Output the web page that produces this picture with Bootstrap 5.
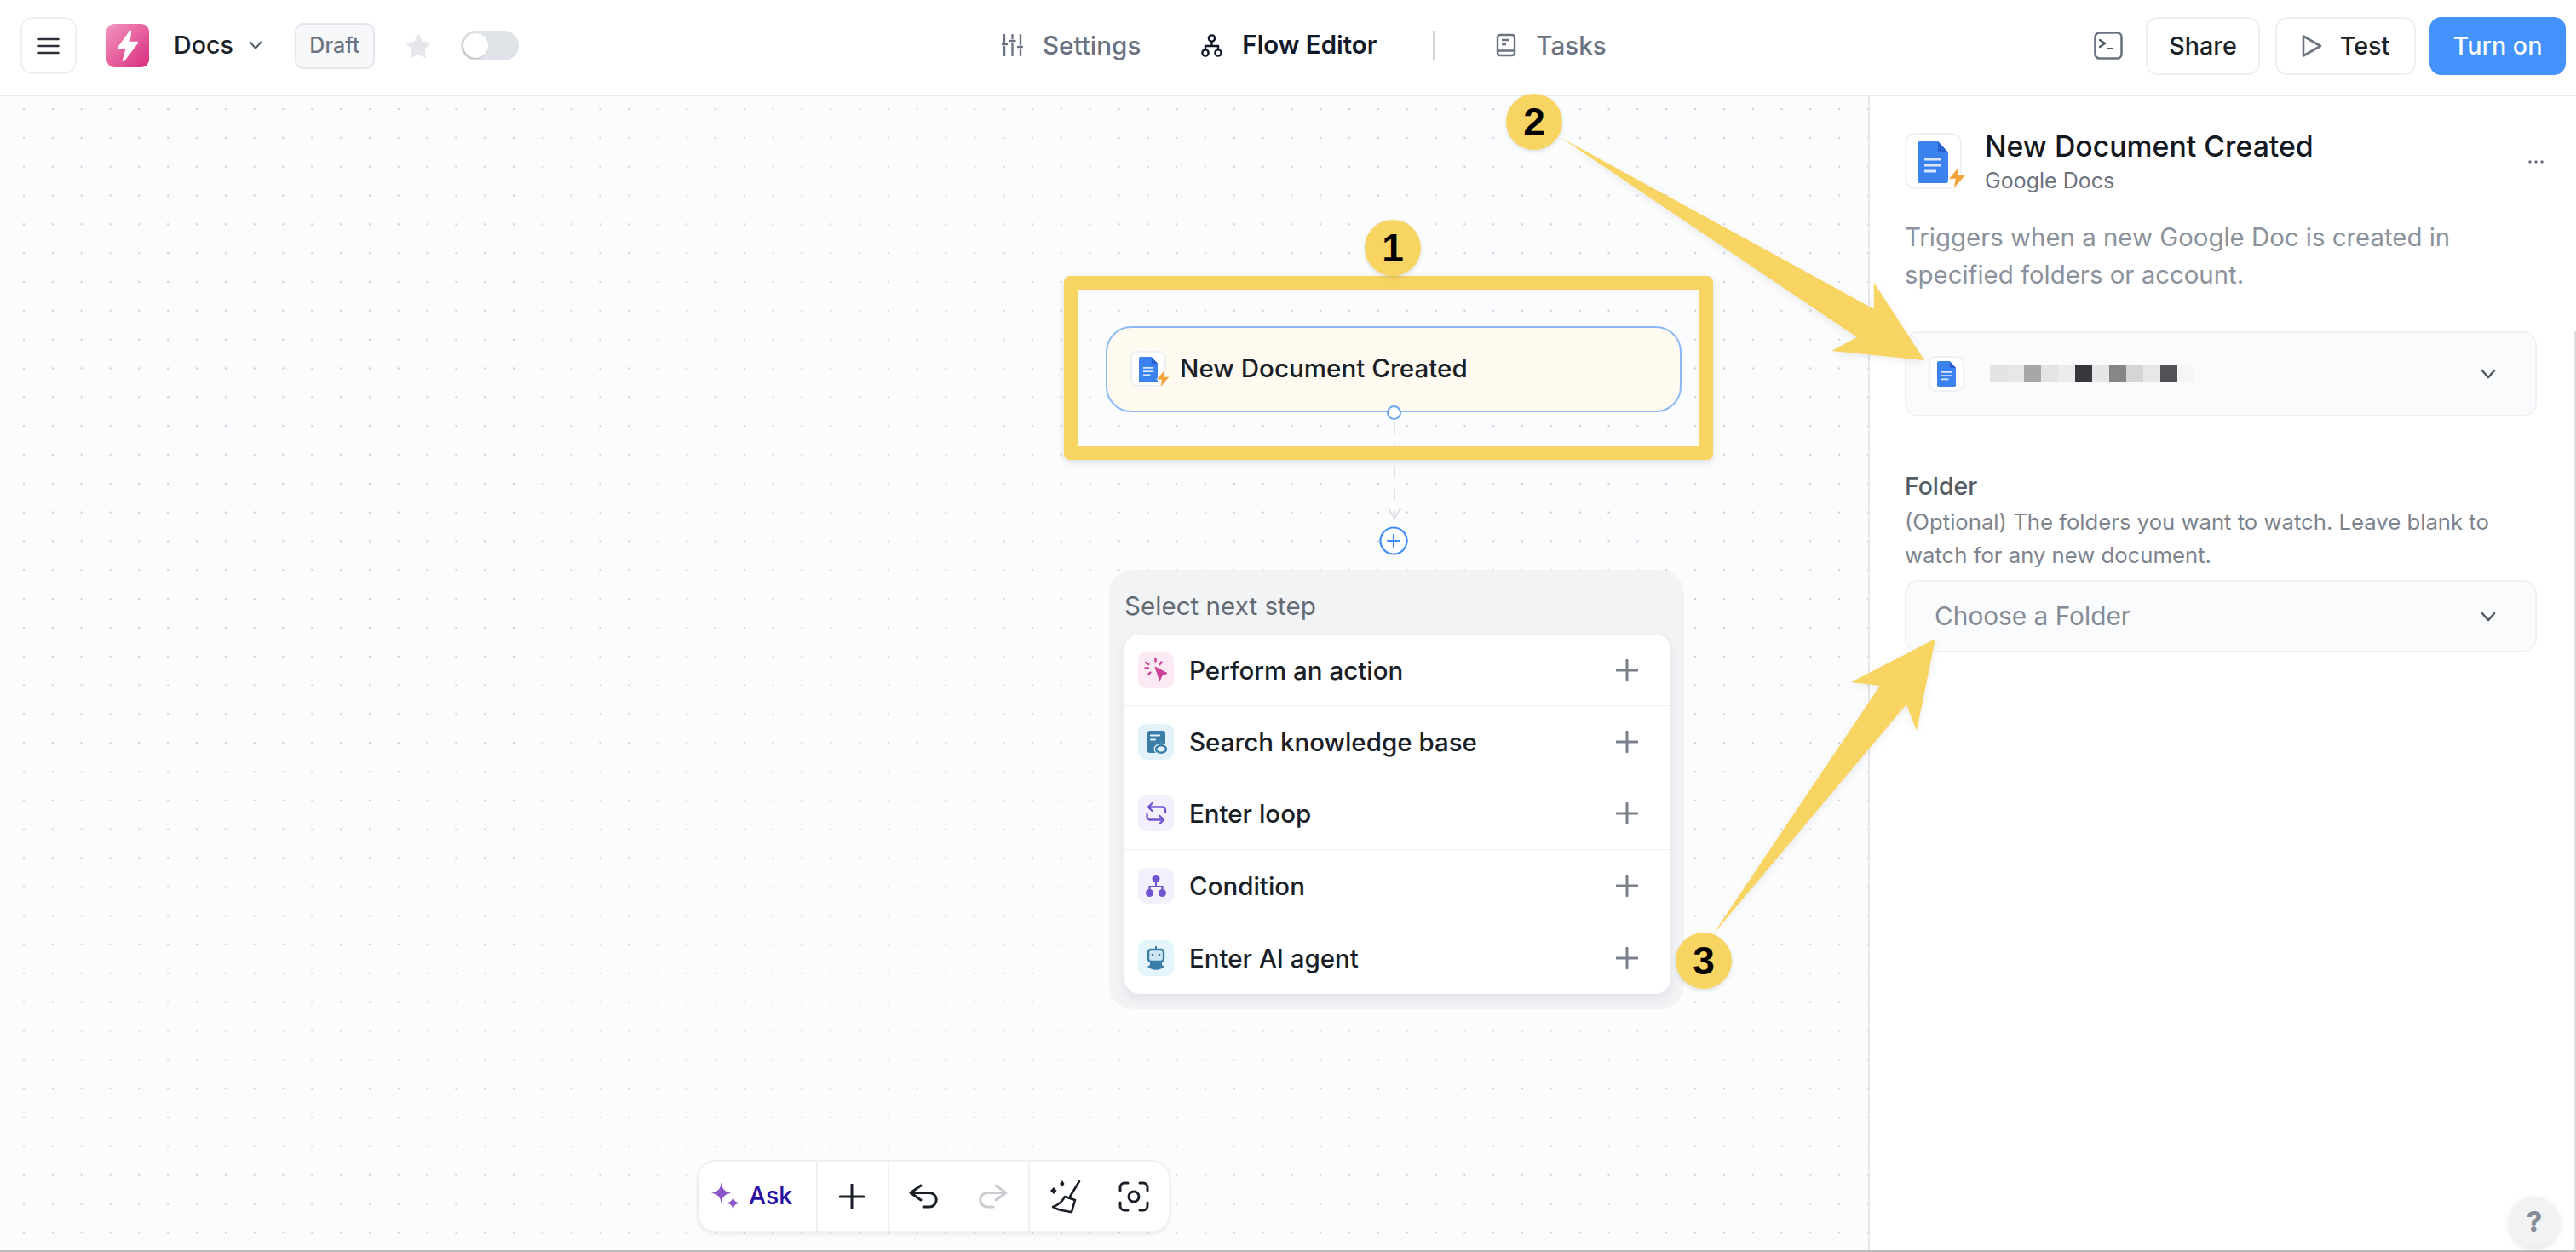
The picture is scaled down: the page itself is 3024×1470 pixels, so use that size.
<!doctype html>
<html lang="en">
<head>
<meta charset="utf-8">
<title>Flow Editor</title>
<link href="https://cdn.jsdelivr.net/npm/bootstrap@5.3.0/dist/css/bootstrap.min.css" rel="stylesheet">
<style>
html,body{height:100%;margin:0}
body{font-family:Inter,"Liberation Sans",sans-serif;color:#1a1f27;background:#fff;width:3024px;height:1470px;overflow:hidden;position:relative;font-size:28px}
.appframe{height:1470px}
.topbar{height:113px;border-bottom:2px solid #e8ebf0;padding:0 12px 4px 24px;background:#fff;flex:none}
.leftgrp{width:1152px;flex:none}
.iconbtn{width:66px;height:67px;border:2px solid #eff0f3;border-radius:14px;background:#fff;padding:0;margin-right:35px}
.logo{width:50px;height:51px;border-radius:9px;background:linear-gradient(135deg,#f296c1,#da2c7c);margin-right:29px}
.docsname{font-weight:500;font-size:28.6px;margin-right:18px}
.draftchip{height:54px;width:94px;border:2px solid #e3e6ea;border-radius:10px;background:#f7f8fa;color:#6b7280;font-size:25px;font-weight:500;margin-left:38px;margin-right:36px}
.switcher{width:68px;height:35px;border-radius:18px;background:#dfe2e6;margin-left:35px;position:relative}
.switcher::after{content:"";position:absolute;left:3px;top:3px;width:29px;height:29px;border-radius:50%;background:#fff;box-shadow:-1px 1px 2px rgba(0,0,0,.2)}
.tabitem{color:#6b7280;font-size:29.6px;font-weight:500;gap:23px;padding:0;white-space:nowrap}
.tabitem.activetab{color:#111827;font-weight:600;font-size:29.4px}
.tabgap{margin-right:71px}
.tabsep{width:2px;height:35px;background:#d3d6db;margin:0 72px 0 66px}
.rightgrp{margin-left:auto}
.topbtn{height:68px;border:2px solid #eeeff2;border-radius:14px;background:#fff;font-size:28.7px;font-weight:500;color:#1a1f27;padding:0;display:flex;align-items:center;justify-content:center}
.topbtn.sharebtn{width:134px;margin:0 18px 0 27px}
.topbtn.testbtn{width:165px;margin-right:16px;gap:21px}
.topbtn.turnbtn{width:160px;background:#4492fb;border-color:#4492fb;color:#fff}
.workarea{flex:1 1 auto;min-height:0;position:relative}
.canvasarea{flex:1 1 auto;position:relative;background-color:#fbfcfe;background-image:radial-gradient(circle at 2px 2px,#cdd0d5 1px,transparent 1.6px);background-size:33.83px 33.83px;background-position:26px 13px;border-right:2px solid #e6e8ec}
.sidepanel{width:829px;flex:none;padding:43px 44px 0 41px;background:#fff;position:relative}
.sidepanel::after{content:"";position:absolute;right:0;top:276px;bottom:0;width:2px;background:#dcdee2}
.appicon{width:67px;height:66px;border:2px solid #eff0f3;border-radius:12px;background:#fff;position:relative;margin-right:27px;flex:none}
.appicon .docglyph{width:36px;height:49px;position:absolute;left:13px;top:8px}
.appicon .boltglyph{width:24px;height:29px;position:absolute;right:-8px;bottom:-3px}
.paneltitle{font-size:33.8px;font-weight:500;line-height:40px;color:#14181f;margin-top:-4px}
.panelsub{font-size:25px;line-height:34px;color:#6b7280;margin-top:3px}
.menudots{position:absolute;left:772px;top:70px;width:20px;height:14px}
.descline{font-size:29.4px;line-height:44px;color:#8b929c;margin:28px 0 0;white-space:nowrap}
.selectbox{border:2px solid #f0f1f4;border-radius:16px;background:#fafbfd;width:742px;position:relative}
.connbox{height:100px;margin-top:44px;padding-left:26px}
.minidoc{width:42px;height:42px;border:2px solid #eff0f3;border-radius:9px;background:#fff;flex:none}
.blurcells{margin-left:30px;height:20px}
.blurcells i{display:block;width:20px;height:20px}
.chev{position:absolute;right:46px;top:50%;margin-top:-6px;width:18px;height:13px}
.fieldlabel{font-size:28.4px;line-height:40px;font-weight:500;color:#565c66;margin-top:62px}
.fieldhelp{font-size:25.7px;line-height:39px;color:#7d848e;margin:2px 0 0;white-space:nowrap}
.folderbox{height:85px;margin-top:10px;padding-left:33px;color:#858b95;font-size:29.8px}
.helpdot{position:absolute;left:751px;top:1293px;width:58px;height:58px;border-radius:50%;background:#f1f2f4;box-shadow:0 2px 8px rgba(0,0,0,.12);color:#868c96;font-weight:800;font-size:32px;line-height:58px;text-align:center}
.bottomline{height:2px;background:#b9bcb9;flex:none}
.trigger{position:absolute;left:1298px;top:270px;width:676px;height:101px;border:2px solid #8cb9f6;border-radius:30px;background:#fffaf0;padding:0 0 3px 27px}
.trigger .appicon{width:42px;height:42px;border-radius:8px;margin-right:16px;top:1px}
.trigger .docglyph{width:22px;height:30px;left:8px;top:5px}
.trigger .boltglyph{width:18px;height:23px;right:-7px;bottom:-4px}
.triggertext{font-size:29.6px;font-weight:500;color:#1a1f27}
.handle{position:absolute;left:1628px;top:363px;width:17px;height:17px;border:2px solid #6ea5f2;border-radius:50%;background:#fff}
.connector{position:absolute;left:1625px;top:380px;width:24px;height:122px}
.addcircle{position:absolute;left:1619px;top:505px;width:34px;height:34px}
.nextpanel{position:absolute;left:1302px;top:556px;width:675px;height:516px;border-radius:28px;background:#f2f3f5;padding:0 16px 0 18px}
.nextlabel{font-size:29.6px;line-height:40px;color:#646a74;margin-top:22px;height:54px}
.steplist{border-radius:18px;background:#fff;box-shadow:0 6px 14px rgba(20,30,50,.07);height:422px;--bs-list-group-border-color:#eff0f2;--bs-list-group-bg:transparent}
.stepitem{height:84.4px;padding:0 38px 0 16px;display:flex;align-items:center;font-size:29.5px;font-weight:500;color:#1a1f27;border-width:0 0 2px}
.stepitem:last-child{border-bottom:0}
.stepicon{width:42px;height:42px;border-radius:9px;margin-right:18px;flex:none}
.tintpink{background:#fbe9f4}.tintblue{background:#e3f2fa}.tintviolet{background:#f3f0fc}.tintsky{background:#e4f5fc}
.toolstrip{position:absolute;left:818px;top:1249px;width:556px;height:85px;background:#fff;border:2px solid #eff0f2;border-radius:22px;box-shadow:0 3px 4px rgba(0,0,0,.06)}
.toolcell{height:100%;border-left:2px solid #eff0f2}
.toolcell:first-child{border-left:0;width:138px;padding-left:15px;gap:10px}
.askword{color:#2710a2;font-weight:500;font-size:28.4px}
.cellplus{width:85px;padding-right:2px}.cellhist{width:165px;gap:44px}.celltools{width:166px;gap:44px}
.annotlayer{position:absolute;left:0;top:0;width:3024px;height:1470px;pointer-events:none;z-index:20}
.annotsvg{position:absolute;left:0;top:0;filter:drop-shadow(0 3px 4px rgba(0,0,0,.08))}
.yframe{position:absolute;left:1249px;top:324px;width:762px;height:216px;border:16.5px solid #f8d462;border-radius:7px;box-shadow:0 3px 8px rgba(0,0,0,.12),inset 0 3px 5px rgba(0,0,0,.03)}
.stepnum{position:absolute;width:66px;height:66px;border-radius:50%;background:#f8d462;color:#000;font-family:"Liberation Sans",Arial,sans-serif;font-weight:700;font-size:46px;line-height:66px;text-align:center;box-shadow:0 2px 5px rgba(0,0,0,.12)}
.numone{left:1602px;top:258px}.numtwo{left:1768px;top:110px}.numthree{left:1967px;top:1095px}
</style>
</head>
<body>
<svg width="0" height="0" class="position-absolute">
<defs>
<symbol id="gdoc" viewBox="0 0 36 49"><path d="M3 0H24L36 13V46a3 3 0 0 1-3 3H3a3 3 0 0 1-3-3V3a3 3 0 0 1 3-3z" fill="#3b82ee"/><path d="M24 0L36 13H24z" fill="#2a5fd0"/><path d="M8 21H28M8 28H28M8 35H22" stroke="#dbe8fb" stroke-width="3" fill="none"/></symbol>
<symbol id="gbolt" viewBox="0 0 21 25" preserveAspectRatio="none"><path d="M13 1L2 14H9L7 24L20 10H12z" fill="#f5a23a" stroke="#fff" stroke-width=".8" stroke-linejoin="round"/></symbol>
<symbol id="chevdown" viewBox="0 0 20 14"><path d="M2 2L10 11L18 2" fill="none" stroke="#4b5563" stroke-width="2.6" stroke-linecap="round" stroke-linejoin="round"/></symbol>
<symbol id="greyplus" viewBox="0 0 26 26"><path d="M13 1V25M1 13H25" stroke="#7b818b" stroke-width="3" stroke-linecap="round"/></symbol>
</defs>
</svg>
<div class="appframe d-flex flex-column">
<header class="topbar d-flex align-items-center">
  <div class="leftgrp d-flex align-items-center">
    <button class="iconbtn btn d-flex align-items-center justify-content-center" type="button" aria-label="Menu"><svg width="26" height="20" viewBox="0 0 26 20"><path d="M1.5 2H24.5M1.5 10H24.5M1.5 18H24.5" stroke="#2b3038" stroke-width="2.5" stroke-linecap="round"/></svg></button>
    <span class="logo d-flex align-items-center justify-content-center"><svg width="28" height="38" viewBox="0 0 28 38"><path d="M17 2L3 21.500H13L9 36L25 15H15z" fill="#fff" stroke="#fff" stroke-width="2.500" stroke-linejoin="round"/></svg></span>
    <span class="docsname">Docs</span>
    <svg width="16" height="11" viewBox="0 0 20 14"><use href="#chevdown"/></svg>
    <span class="draftchip d-flex align-items-center justify-content-center">Draft</span>
    <svg width="30" height="30" viewBox="0 0 30 30"><path d="M15 2L19 10.500L28 12L21.500 18.500L23 28L15 23.500L7 28L8.500 18.500L2 12L11 10.500z" fill="#e5e7eb" stroke="#e5e7eb" stroke-width="2" stroke-linejoin="round"/></svg>
    <span class="switcher"></span>
  </div>
  <nav class="d-flex align-items-center">
    <a class="tabitem tabgap d-flex align-items-center text-decoration-none" href="#"><svg width="25" height="26" viewBox="0 0 25 26"><path d="M3 1V9M3 15V25M12.500 1V5M12.500 11V25M22 1V12M22 18V25M0 12H6M9.500 8H15.500M19 15H25" stroke="#6b7280" stroke-width="2.400" fill="none" stroke-linecap="round"/></svg>Settings</a>
    <a class="tabitem activetab d-flex align-items-center text-decoration-none" href="#"><svg width="25" height="27" viewBox="0 0 25 27"><g fill="none" stroke="#111827" stroke-width="2.400"><circle cx="12.500" cy="5" r="3.600"/><circle cx="5" cy="22" r="3.600"/><circle cx="20" cy="22" r="3.600"/><path d="M12.500 9V14M5 18V14H20V18"/></g></svg>Flow Editor</a>
    <span class="tabsep"></span>
    <a class="tabitem d-flex align-items-center text-decoration-none" href="#"><svg width="24" height="28" viewBox="0 0 24 28"><g fill="none" stroke="#6b7280" stroke-width="2.400" stroke-linejoin="round"><rect x="2" y="2" width="20" height="24" rx="3"/><path d="M2 20.500H22M7 8H16M7 13H12"/></g></svg>Tasks</a>
  </nav>
  <div class="rightgrp d-flex align-items-center">
    <svg width="34" height="33" viewBox="0 0 34 33"><g fill="none" stroke="#6b7280" stroke-linecap="round"><rect x="1.500" y="1.500" width="31" height="30" rx="5" stroke-width="2.600"/><path d="M7 10L13 14L7 18M16 20H22" stroke="#4b5563" stroke-width="2.200"/></g></svg>
    <button class="btn topbtn sharebtn" type="button">Share</button>
    <button class="btn topbtn testbtn" type="button"><svg width="24" height="28" viewBox="0 0 24 28"><path d="M2 2.500L22 14L2 25.500z" fill="none" stroke="#6b7280" stroke-width="2.600" stroke-linejoin="round"/></svg>Test</button>
    <button class="btn topbtn turnbtn" type="button">Turn on</button>
  </div>
</header>
<main class="workarea d-flex">
  <section class="canvasarea">
    <div class="trigger d-flex align-items-center">
      <span class="appicon"><svg class="docglyph"><use href="#gdoc"/></svg><svg class="boltglyph"><use href="#gbolt"/></svg></span>
      <span class="triggertext">New Document Created</span>
    </div>
    <span class="handle"></span>
    <svg class="connector" viewBox="0 0 24 122"><path d="M12 2V112" stroke="#dfe1e5" stroke-width="2" stroke-dasharray="14 12" fill="none"/><path d="M5 104L12 116L19 104" stroke="#dfe1e5" stroke-width="2" fill="none"/></svg>
    <svg class="addcircle" viewBox="0 0 34 34"><circle cx="17" cy="17" r="15.500" fill="#fff" stroke="#3f8df5" stroke-width="2.200"/><path d="M17 10V24M10 17H24" stroke="#3f8df5" stroke-width="2.200" stroke-linecap="round"/></svg>
    <div class="nextpanel">
      <div class="nextlabel">Select next step</div>
      <ul class="list-group list-group-flush steplist">
        <li class="list-group-item stepitem"><span class="stepicon tintpink d-flex"><svg width="42" height="42" viewBox="0 0 42 42"><path d="M20 17L34 24.500L28 27L25.500 33z" fill="#c8409a" stroke="#c8409a" stroke-linejoin="round"/><path d="M20.500 7V10.500M27.500 11.500L25.500 14M9 12L12.500 14M8.500 18.500H12M12 26L14.500 23.500" stroke="#c8409a" stroke-width="2.400" stroke-linecap="round"/></svg></span>Perform an action<svg class="ms-auto" width="26" height="26"><use href="#greyplus"/></svg></li>
        <li class="list-group-item stepitem"><span class="stepicon tintblue d-flex"><svg width="42" height="42" viewBox="0 0 42 42"><rect x="10.500" y="8" width="21.500" height="26" rx="3.500" fill="#3a7ea8"/><path d="M15 13.500H25M15 18.500H20" stroke="#e3f2fa" stroke-width="2.200" stroke-linecap="round"/><ellipse cx="27" cy="29.500" rx="7" ry="5.200" fill="#e3f2fa" stroke="#e3f2fa" stroke-width="3"/><ellipse cx="27" cy="29.500" rx="6" ry="4.300" fill="none" stroke="#3a7ea8" stroke-width="2.400"/></svg></span>Search knowledge base<svg class="ms-auto" width="26" height="26"><use href="#greyplus"/></svg></li>
        <li class="list-group-item stepitem"><span class="stepicon tintviolet d-flex"><svg width="42" height="42" viewBox="0 0 42 42"><path d="M32 20V17a3.500 3.500 0 0 0-3.500-3.500H12M16.500 9L12 13.500L16.500 18M10.500 22V25a3.500 3.500 0 0 0 3.500 3.500H30M25.500 24L30 28.500L25.500 33" fill="none" stroke="#6f55d0" stroke-width="2.400" stroke-linecap="round" stroke-linejoin="round"/></svg></span>Enter loop<svg class="ms-auto" width="26" height="26"><use href="#greyplus"/></svg></li>
        <li class="list-group-item stepitem"><span class="stepicon tintviolet d-flex"><svg width="42" height="42" viewBox="0 0 42 42"><g fill="#6f55d0"><circle cx="21" cy="12.500" r="4.500"/><circle cx="13.500" cy="29.500" r="4.500"/><circle cx="28.500" cy="29.500" r="4.500"/></g><path d="M21 16V22M13.500 26V22H28.500V26" fill="none" stroke="#6f55d0" stroke-width="2.200"/></svg></span>Condition<svg class="ms-auto" width="26" height="26"><use href="#greyplus"/></svg></li>
        <li class="list-group-item stepitem"><span class="stepicon tintsky d-flex"><svg width="42" height="42" viewBox="0 0 42 42"><path d="M21 7V11" stroke="#3a7ea8" stroke-width="2"/><rect x="12" y="11" width="18" height="14" rx="3" fill="#cfe7f2" stroke="#3a7ea8" stroke-width="2.400"/><path d="M17 16V19M25 16V19" stroke="#3a7ea8" stroke-width="2.400"/><path d="M14 26H28V29L31 31L27 33.500a8 4 0 0 1-12 0L11 31L14 29z" fill="#3a7ea8"/></svg></span>Enter AI agent<svg class="ms-auto" width="26" height="26"><use href="#greyplus"/></svg></li>
      </ul>
    </div>
    <div class="toolstrip d-flex">
      <div class="toolcell d-flex align-items-center"><svg width="34" height="34" viewBox="0 0 32 32"><path d="M11 0C12 7.500 14 10.500 22 12C14 13.500 12 16.500 11 24C10 16.500 8 13.500 0 12C8 10.500 10 7.500 11 0zM24 15C24.500 20 26 22 32 23C26 24 24.500 26 24 32C23.500 26 22 24 16 23C22 22 23.500 20 24 15z" fill="#8a56c8"/></svg><span class="askword">Ask</span></div>
      <div class="toolcell cellplus d-flex align-items-center justify-content-center"><svg width="30" height="30" viewBox="0 0 30 30"><path d="M15 1V29M1 15H29" stroke="#1a1f27" stroke-width="3" stroke-linecap="round"/></svg></div>
      <div class="toolcell cellhist d-flex align-items-center justify-content-center"><svg width="36" height="30" viewBox="0 0 36 30"><path d="M14 2L2 10.500L14 19M2 10.500H24a8 8 0 0 1 0 16.500H17" fill="none" stroke="#1a1f27" stroke-width="3" stroke-linecap="round" stroke-linejoin="round"/></svg><svg width="36" height="30" viewBox="0 0 36 30"><path d="M22 2L34 10.500L22 19M34 10.500H12a8 8 0 0 0 0 16.500H19" fill="none" stroke="#c9cdd2" stroke-width="3" stroke-linecap="round" stroke-linejoin="round"/></svg></div>
      <div class="toolcell celltools d-flex align-items-center justify-content-center"><svg width="38" height="40" viewBox="0 0 38 40"><path d="M36 2L25 20M19 20L31 24L27 38C20 37 10 36 5 32C11 30 16 26 19 20z" fill="none" stroke="#1a1f27" stroke-width="2.600" stroke-linejoin="round" stroke-linecap="round"/><path d="M16 1L18.500 5L16 8.500L13 5zM6 9L9.500 13L6 17L2 13z" fill="#1a1f27"/></svg><svg width="36" height="36" viewBox="0 0 36 36"><g fill="none" stroke="#1a1f27" stroke-width="3" stroke-linecap="round"><path d="M2 11V7a5 5 0 0 1 5-5H11M25 2H29a5 5 0 0 1 5 5V11M34 25V29a5 5 0 0 1-5 5H25M11 34H7a5 5 0 0 1-5-5V25"/><circle cx="18" cy="18" r="6"/></g></svg></div>
    </div>
  </section>
  <aside class="sidepanel">
    <div class="d-flex align-items-start">
      <span class="appicon"><svg class="docglyph"><use href="#gdoc"/></svg><svg class="boltglyph"><use href="#gbolt"/></svg></span>
      <div>
        <div class="paneltitle">New Document Created</div>
        <div class="panelsub">Google Docs</div>
      </div>
      <svg class="menudots" viewBox="0 0 22 16"><g fill="#6b7280"><circle cx="3" cy="8" r="2"/><circle cx="11" cy="8" r="2"/><circle cx="19" cy="8" r="2"/></g></svg>
    </div>
    <p class="descline">Triggers when a new Google Doc is created in<br>specified folders or account.</p>
    <div class="selectbox connbox d-flex align-items-center">
      <span class="minidoc d-flex align-items-center justify-content-center"><svg width="22" height="30"><use href="#gdoc"/></svg></span>
      <span class="blurcells d-flex">
        <i style="background:#e2e3e5"></i><i style="background:#e6e7e9"></i><i style="background:#a6a7a9"></i><i style="background:#e3e4e6"></i><i style="background:#ebecee"></i><i style="background:#36383b"></i><i style="background:#e5e6e8"></i><i style="background:#858688"></i><i style="background:#d4d5d7"></i><i style="background:#e6e7e9"></i><i style="background:#505256"></i><i style="background:#f5f6f8"></i>
      </span>
      <svg class="chev"><use href="#chevdown"/></svg>
    </div>
    <div class="fieldlabel">Folder</div>
    <p class="fieldhelp">(Optional) The folders you want to watch. Leave blank to<br>watch for any new document.</p>
    <div class="selectbox folderbox d-flex align-items-center">Choose a Folder<svg class="chev"><use href="#chevdown"/></svg></div>
    <div class="helpdot">?</div>
  </aside>
</main>
<div class="bottomline"></div>
</div>
<div class="annotlayer">
  <div class="yframe"></div>
  <svg class="annotsvg" width="3024" height="1470" viewBox="0 0 3024 1470"><polygon points="1833,162 2200,363 2200,332 2259,423 2150,412 2180,396" fill="#f8d462"/><polygon points="2011,1097 2207,805 2173,801 2272,750 2250,858 2238,827" fill="#f8d462"/></svg>
  <span class="stepnum numone">1</span><span class="stepnum numtwo">2</span><span class="stepnum numthree">3</span>
</div>
<script src="https://cdn.jsdelivr.net/npm/bootstrap@5.3.0/dist/js/bootstrap.bundle.min.js"></script>
</body>
</html>
